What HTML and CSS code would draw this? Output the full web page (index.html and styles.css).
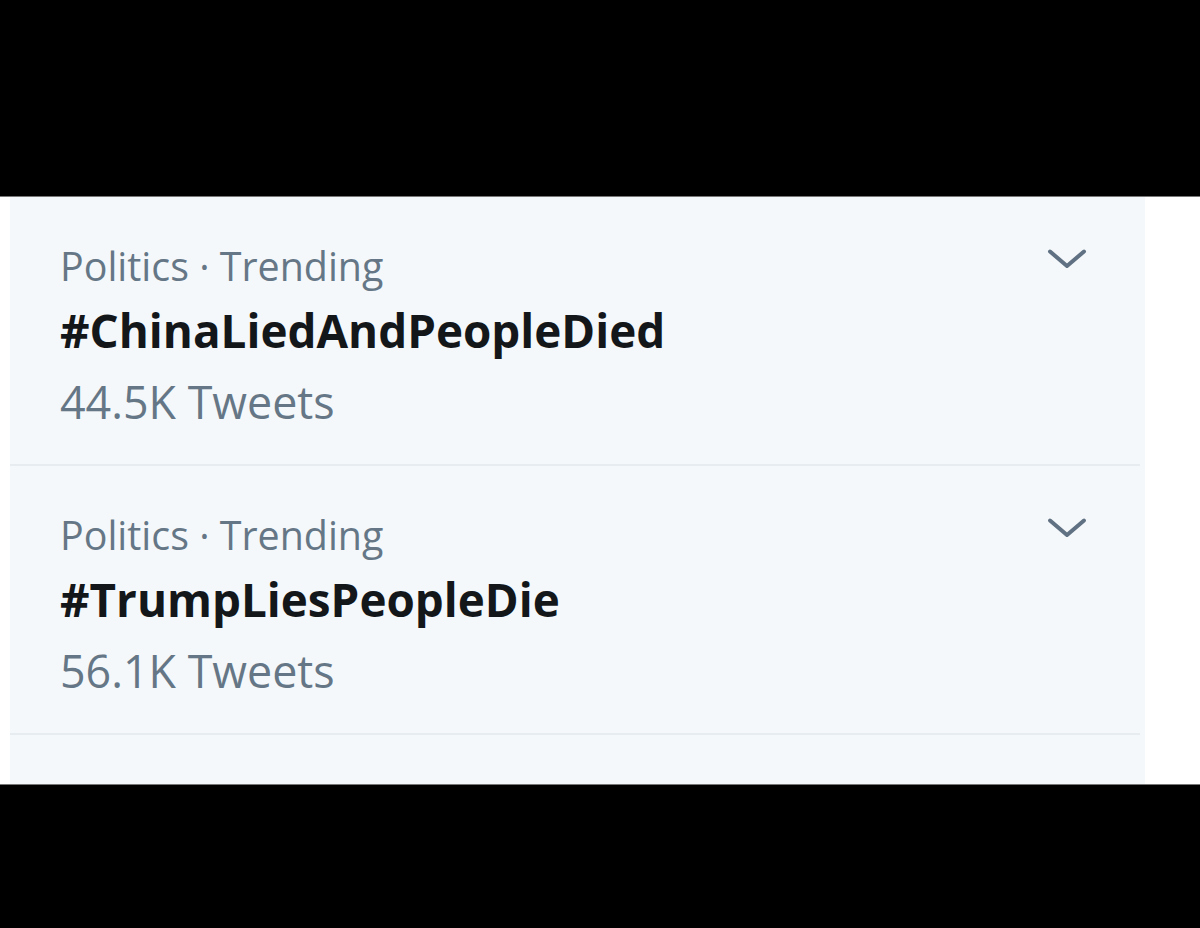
FILE: index.html
```html
<!DOCTYPE html>
<html>
<head>
<meta charset="utf-8">
<link rel="stylesheet" href="styles.css">
</head>
<body>
<div class="top-bar"></div>
<div class="stage">
  <div class="panel">
    <div class="trend">
      <div class="trend-text">
        <div class="meta">Politics · Trending</div>
        <div class="tag">#ChinaLiedAndPeopleDied</div>
        <div class="count">44.5K Tweets</div>
      </div>
      <svg class="chev" viewBox="0 0 40 22" width="40" height="22"><path d="M3 3.5 L20 18 L37 3.5" fill="none" stroke="#5f7182" stroke-width="4" stroke-linecap="round" stroke-linejoin="round"/></svg>
    </div>
    <div class="trend">
      <div class="trend-text">
        <div class="meta">Politics · Trending</div>
        <div class="tag">#TrumpLiesPeopleDie</div>
        <div class="count">56.1K Tweets</div>
      </div>
      <svg class="chev" viewBox="0 0 40 22" width="40" height="22"><path d="M3 3.5 L20 18 L37 3.5" fill="none" stroke="#5f7182" stroke-width="4" stroke-linecap="round" stroke-linejoin="round"/></svg>
    </div>
  </div>
</div>
<div class="bottom-bar"></div>
</body>
</html>
```
FILE: styles.css
```css
html, body {
  margin: 0;
  padding: 0;
  background: #000;
}
body {
  width: 1200px;
  height: 928px;
  overflow: hidden;
  font-family: "Open Sans", "Noto Sans", sans-serif;
}
.top-bar {
  height: 196px;
  background: #000;
  border-bottom: 1px solid #777;
}
.stage {
  height: 587px;
  background: #fff;
  padding-left: 10px;
  box-sizing: border-box;
}
.panel {
  width: 1135px;
  height: 100%;
  background: #f5f8fa;
}
.trend {
  height: 269px;
  box-sizing: border-box;
  border-bottom: 2px solid #e6ecf0;
  margin-right: 5px;
  padding: 39px 0 0 50px;
  display: flex;
  justify-content: space-between;
  align-items: flex-start;
}
.trend-text {
  display: flex;
  flex-direction: column;
}
.meta {
  color: #657786;
  font-size: 39.4px;
  line-height: 60px;
}
.tag {
  color: #14171a;
  font-size: 45.8px;
  font-weight: 700;
  line-height: 68px;
}
.count {
  color: #657786;
  font-size: 44.8px;
  line-height: 76px;
}
.chev {
  margin-top: 12px;
  margin-right: 53px;
}
.bottom-bar {
  height: 145px;
  background: #000;
  border-top: 1px solid #777;
}
```
